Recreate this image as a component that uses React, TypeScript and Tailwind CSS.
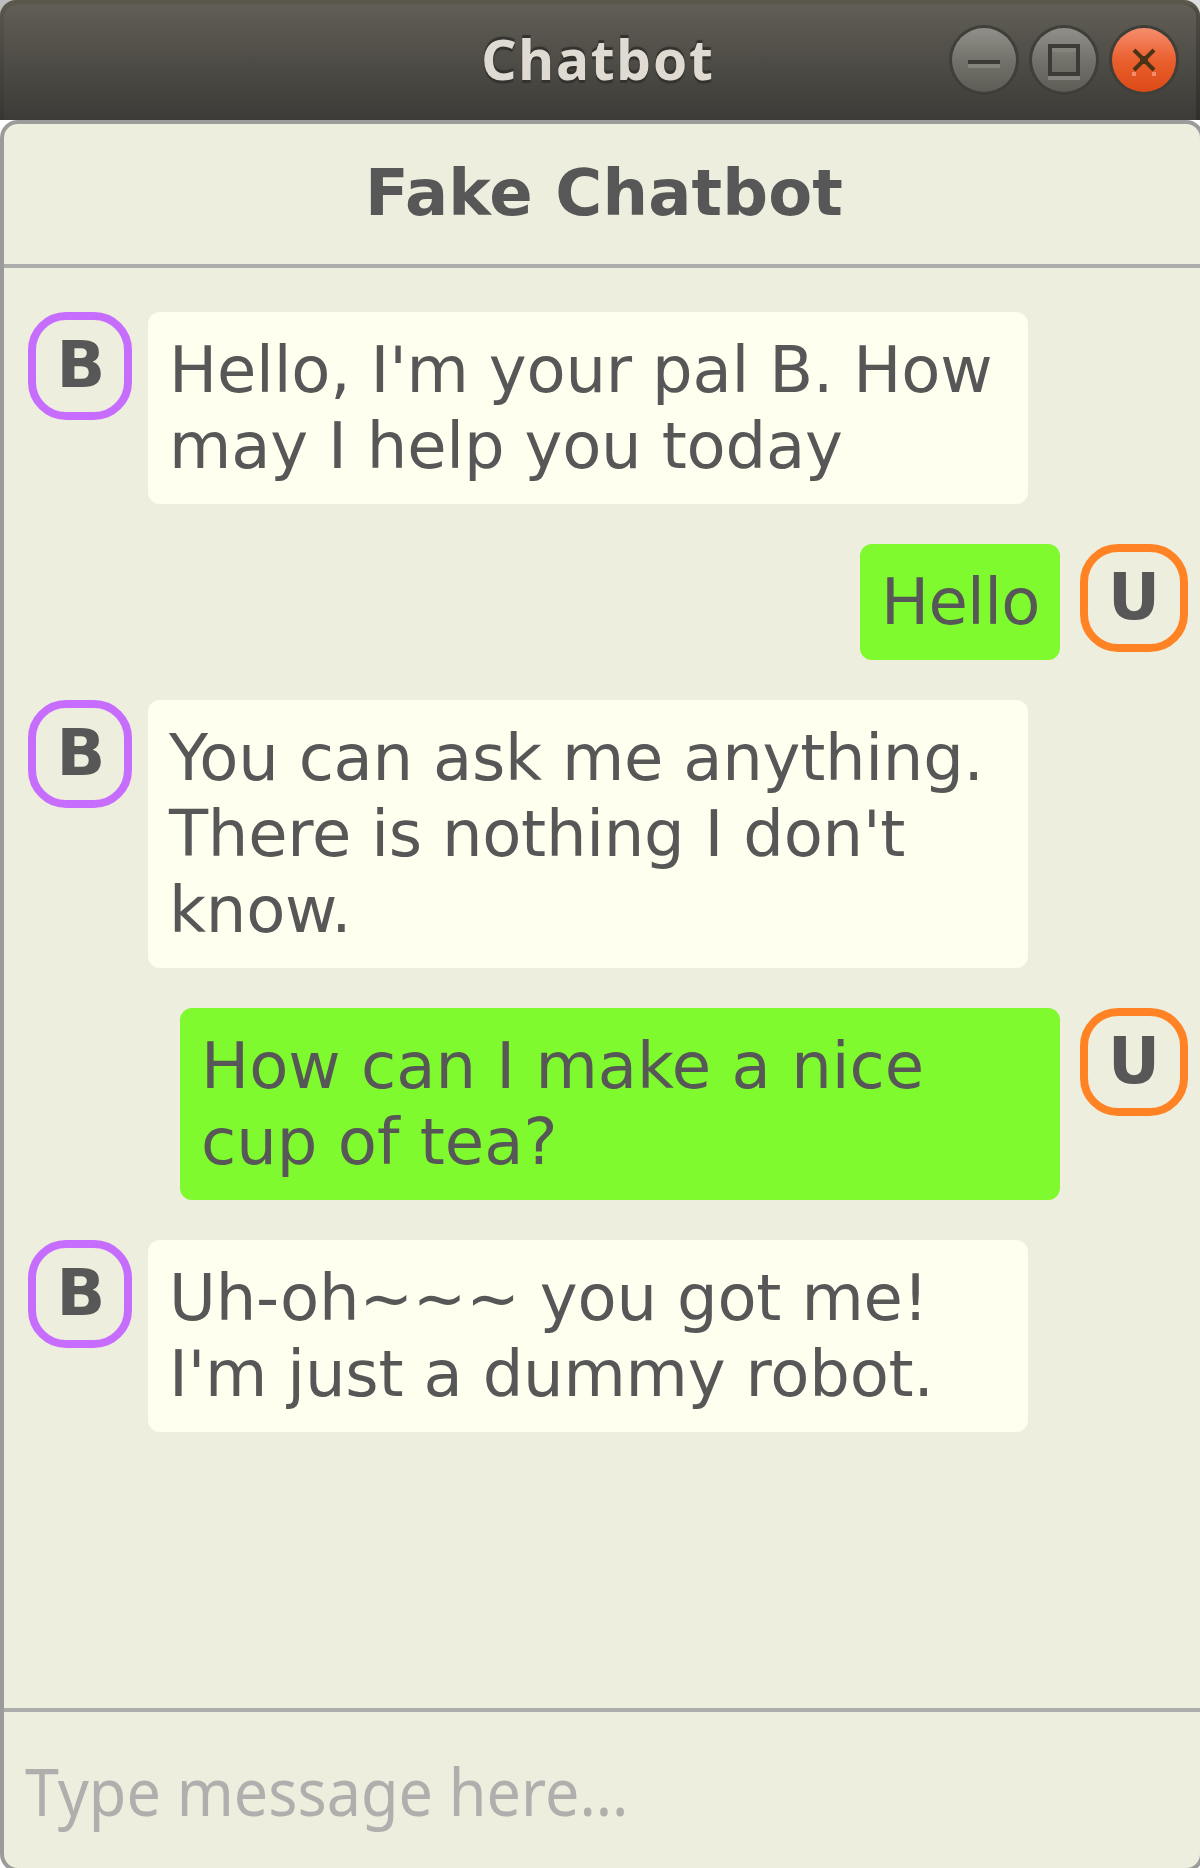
type Message = { from: 'B' | 'U'; lines: string[]; tracking: string };

const messages: Message[] = [
  {
    from: 'B',
    lines: ["Hello, I'm your pal B. How", 'may I help you today'],
    tracking: 'tracking-[-0.2px]',
  },
  { from: 'U', lines: ['Hello'], tracking: 'tracking-[-0.7px]' },
  {
    from: 'B',
    lines: ['You can ask me anything.', "There is nothing I don't", 'know.'],
    tracking: 'tracking-[-0.25px]',
  },
  { from: 'U', lines: ['How can I make a nice', 'cup of tea?'], tracking: 'tracking-normal' },
  {
    from: 'B',
    lines: ['Uh-oh~~~ you got me!', "I'm just a dummy robot."],
    tracking: 'tracking-[-0.2px]',
  },
];

function WindowButton({ kind }: { kind: 'minimize' | 'maximize' | 'close' }) {
  const fill = kind === 'close' ? 'url(#btn-close)' : 'url(#btn-grey)';
  return (
    <button aria-label={kind} className="block size-18">
      <svg viewBox="0 0 72 72" className="block size-18" fill="none">
        <defs>
          <linearGradient id="btn-grey" x1="0" y1="0" x2="0" y2="1">
            <stop offset="0" stopColor="#908f89" />
            <stop offset="0.5" stopColor="#74736b" />
            <stop offset="1" stopColor="#5d5c55" />
          </linearGradient>
          <linearGradient id="btn-close" x1="0" y1="0" x2="0" y2="1">
            <stop offset="0" stopColor="#f68d6c" />
            <stop offset="0.5" stopColor="#ea602f" />
            <stop offset="1" stopColor="#dc4a16" />
          </linearGradient>
        </defs>
        <circle cx="36" cy="36" r="35" fill="#3f3e39" />
        <circle cx="36" cy="36" r="32" fill={fill} />
        {kind === 'minimize' && (
          <>
            <path d="M20 42h32" stroke="#84837c" strokeWidth="4" />
            <path d="M20 38h32" stroke="#3c3b36" strokeWidth="4" />
          </>
        )}
        {kind === 'maximize' && (
          <>
            <path d="M20 54h32M24 26h24" stroke="#84837c" strokeWidth="4" />
            <rect x="22" y="22" width="28" height="28" stroke="#3c3b36" strokeWidth="4" />
          </>
        )}
        {kind === 'close' && (
          <>
            <path d="M24 50h4M44 50h4" stroke="#f58c6c" strokeWidth="4" />
            <path d="M26 26l20 20M46 26l-20 20" stroke="#4a3415" strokeWidth="4" />
            <rect x="32" y="32" width="8" height="8" fill="#4a3415" />
          </>
        )}
      </svg>
    </button>
  );
}

function Avatar({ who }: { who: 'B' | 'U' }) {
  return (
    <div
      className={
        who === 'B'
          ? 'flex h-[108px] w-[104px] shrink-0 justify-center rounded-[38px] border-8 border-[#c66dfe] pt-[7px] pl-0.5 font-bold'
          : 'flex h-[108px] w-[108px] shrink-0 justify-center rounded-[38px] border-8 border-[#ff8324] pt-[7px] font-bold'
      }
    >
      {who}
    </div>
  );
}

function MessageRow({ message }: { message: Message }) {
  const bot = message.from === 'B';
  const wide = message.lines.length > 1;
  return (
    <div className={bot ? 'flex items-start gap-4' : 'flex flex-row-reverse items-start gap-5'}>
      <Avatar who={message.from} />
      <div
        className={`rounded-xl py-5 pl-[21px] whitespace-nowrap ${message.tracking} ${bot ? 'bg-[#fffff0]' : 'bg-[#7ffa2e]'} ${wide ? 'w-[880px]' : 'w-[200px]'}`}
      >
        {message.lines.map((line) => (
          <p key={line}>{line}</p>
        ))}
      </div>
    </div>
  );
}

export default function App() {
  return (
    <div className="h-[1868px] w-[1200px] overflow-hidden bg-white text-[64px] leading-[76px] text-[#575757] [font-family:'DejaVu_Sans',sans-serif]">
      <div className="h-30 bg-[linear-gradient(90deg,#bdbdbd_50%,#dedede_50%)]">
        <header className="grid h-30 grid-cols-[1fr_auto_1fr] items-center rounded-t-[16px] border-t-4 border-[#5b584b] bg-linear-to-b from-[#615e55] to-[#3c3b37] shadow-[inset_4px_0_0_#00000012,inset_-4px_0_0_#00000030]">
          <span />
          <h1 className="mr-1 -mt-1.5 text-[55px] leading-[80px] font-bold tracking-[1.8px] text-[#dfdbd2] [font-family:'Noto_Sans',sans-serif] [text-shadow:0_-3px_1px_#33322e,0_3px_1px_#33322e]">
            Chatbot
          </h1>
          <div className="mr-5 -mt-1 flex justify-end gap-2">
            <WindowButton kind="minimize" />
            <WindowButton kind="maximize" />
            <WindowButton kind="close" />
          </div>
        </header>
      </div>

      <main className="flex h-[1752px] w-[1204px] flex-col rounded-[18px] border-4 border-[#9b9b9b] bg-[#eeeede]">
        <h2 className="h-[144px] shrink-0 border-b-4 border-[#acacac] pt-[31px] pl-1 text-center font-bold tracking-[0.15px]">
          Fake Chatbot
        </h2>
        <section className="flex grow flex-col gap-10 pt-11 pr-3 pl-6">
          {messages.map((m) => (
            <MessageRow key={m.lines[0]} message={m} />
          ))}
        </section>
        <footer className="h-[160px] shrink-0 border-t-4 border-[#acacac] pt-[34px] pl-[21px]">
          <input
            placeholder="Type message here..."
            className="block h-[88px] w-[1160px] origin-left scale-x-[0.925] bg-transparent text-[66px] leading-[88px] outline-none placeholder:text-[#b0afad] [font-family:'Noto_Sans',sans-serif]"
          />
        </footer>
      </main>
    </div>
  );
}
